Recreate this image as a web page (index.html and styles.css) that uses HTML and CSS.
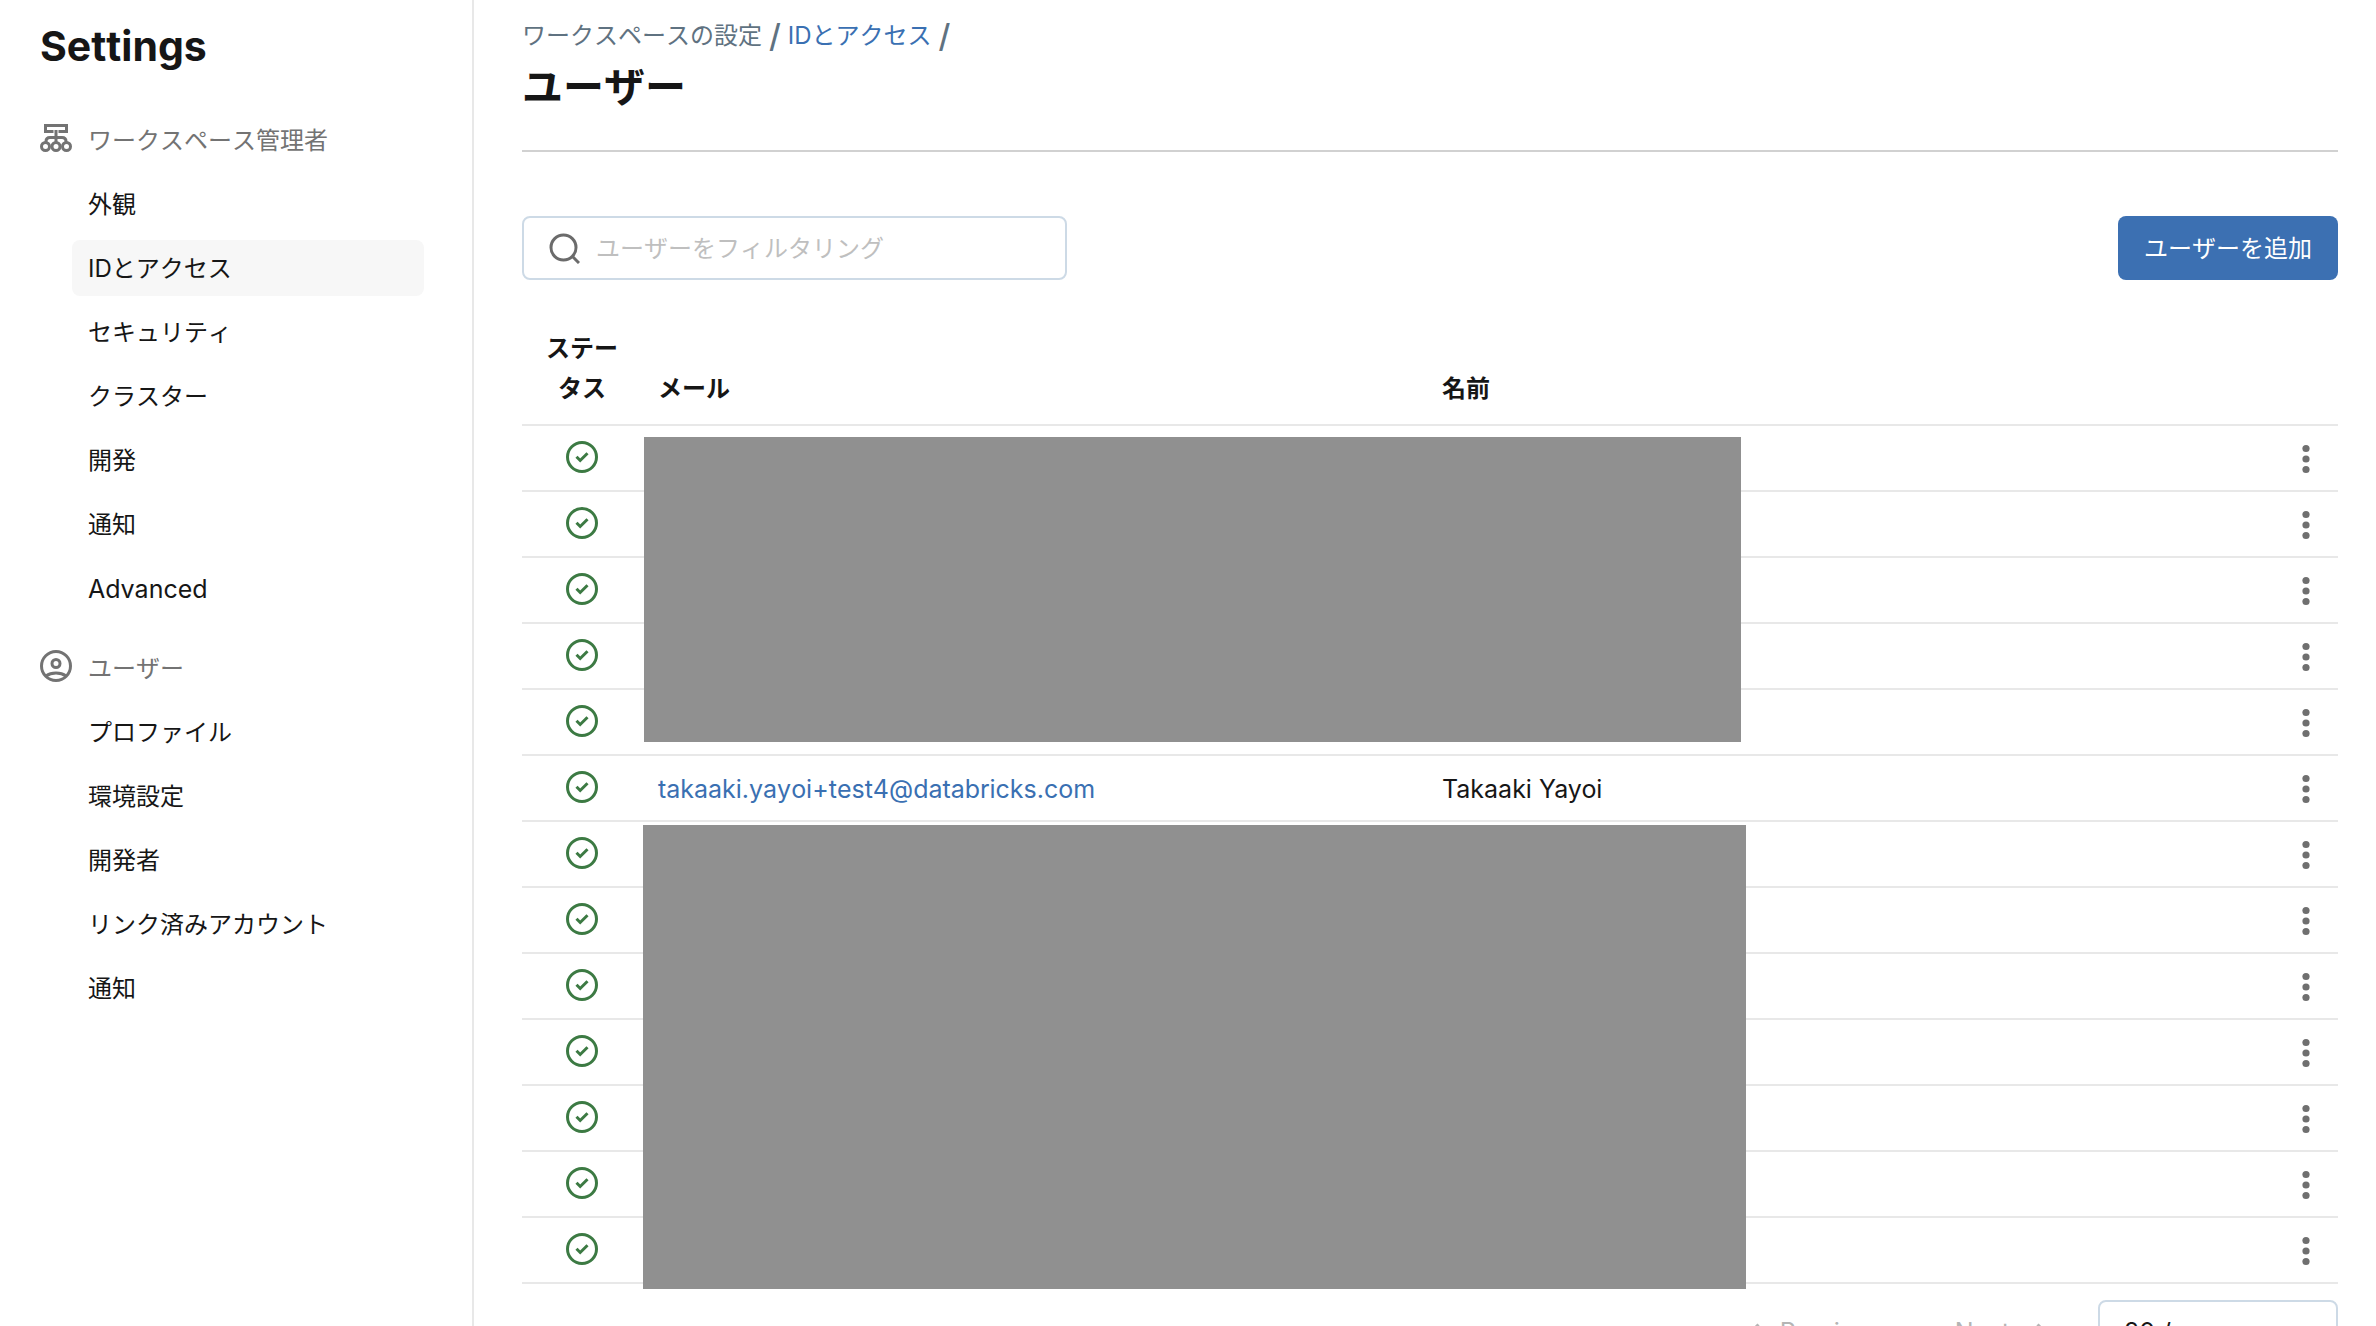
FILE: index.html
```html
<!DOCTYPE html>
<html lang="ja">
<head>
<meta charset="utf-8">
<title>ユーザー</title>
<link rel="stylesheet" href="styles.css">
</head>
<body>
<svg class="sprite" aria-hidden="true">
  <symbol id="check" viewBox="0 0 32 32"><circle cx="16" cy="16" r="14.5" fill="none" stroke="currentColor" stroke-width="3"/><path d="M10.5 15.8L14.2 19.5L21.5 12.2" fill="none" stroke="currentColor" stroke-width="3"/></symbol>
  <symbol id="dots" viewBox="0 0 32 32"><g fill="currentColor"><circle cx="16" cy="5.5" r="3.6"/><circle cx="16" cy="16" r="3.6"/><circle cx="16" cy="26.5" r="3.6"/></g></symbol>
</svg>
<div class="app">
  <nav class="sidebar">
    <h2 class="sidebar-title">Settings</h2>
    <section class="group">
      <h3 class="group-title">
        <svg class="icon" viewBox="0 0 32 32" fill="none" stroke="currentColor" stroke-width="3"><path d="M13.5 9.5H5.5V3.5H26.500V9.500H18.500M16 8V20M6 20V19.500Q6 15.500 10 15.500H22Q26 15.500 26 19.500V20"/><circle cx="5.500" cy="24.500" r="4"/><circle cx="16" cy="24.500" r="4"/><circle cx="26.500" cy="24.500" r="4"/></svg>
        ワークスペース管理者
      </h3>
      <ul class="menu">
        <li><a href="#">外観</a></li>
        <li><a href="#" class="active">IDとアクセス</a></li>
        <li><a href="#">セキュリティ</a></li>
        <li><a href="#">クラスター</a></li>
        <li><a href="#">開発</a></li>
        <li><a href="#">通知</a></li>
        <li><a href="#" class="latin">Advanced</a></li>
      </ul>
    </section>
    <section class="group">
      <h3 class="group-title">
        <svg class="icon" viewBox="0 0 32 32" fill="none" stroke="currentColor" stroke-width="3"><circle cx="16" cy="16" r="14.5"/><circle cx="16" cy="13.500" r="4"/><path d="M6 26Q10 23 16 23T26 26"/></svg>
        ユーザー
      </h3>
      <ul class="menu">
        <li><a href="#">プロファイル</a></li>
        <li><a href="#">環境設定</a></li>
        <li><a href="#">開発者</a></li>
        <li><a href="#">リンク済みアカウント</a></li>
        <li><a href="#">通知</a></li>
      </ul>
    </section>
  </nav>
  <main class="content">
    <header class="page-head">
      <div class="crumbs"><a href="#" class="crumb">ワークスペースの設定</a><span class="slash">/</span><a href="#" class="crumb link">IDとアクセス</a><span class="slash">/</span></div>
      <h1 class="page-title">ユーザー</h1>
    </header>
    <div class="toolbar">
      <label class="search">
        <svg class="icon" viewBox="0 0 32 32" fill="none" stroke="currentColor" stroke-width="3"><circle cx="15.500" cy="15.500" r="12.500"/><path d="M24.500 24.500L31 31"/></svg>
        <input type="search" placeholder="ユーザーをフィルタリング" aria-label="ユーザーをフィルタリング">
      </label>
      <button type="button" class="primary">ユーザーを追加</button>
    </div>
    <div class="table-wrap">
      <table class="users">
        <colgroup><col class="col-status"><col class="col-mail"><col><col class="col-menu"></colgroup>
        <thead><tr><th class="status">ステータス</th><th>メール</th><th>名前</th><th></th></tr></thead>
        <tbody>
          <tr><td class="status"><svg class="icon"><use href="#check"/></svg></td><td></td><td></td><td class="actions"><button type="button" aria-label="メニュー"><svg class="icon"><use href="#dots"/></svg></button></td></tr>
          <tr><td class="status"><svg class="icon"><use href="#check"/></svg></td><td></td><td></td><td class="actions"><button type="button" aria-label="メニュー"><svg class="icon"><use href="#dots"/></svg></button></td></tr>
          <tr><td class="status"><svg class="icon"><use href="#check"/></svg></td><td></td><td></td><td class="actions"><button type="button" aria-label="メニュー"><svg class="icon"><use href="#dots"/></svg></button></td></tr>
          <tr><td class="status"><svg class="icon"><use href="#check"/></svg></td><td></td><td></td><td class="actions"><button type="button" aria-label="メニュー"><svg class="icon"><use href="#dots"/></svg></button></td></tr>
          <tr><td class="status"><svg class="icon"><use href="#check"/></svg></td><td></td><td></td><td class="actions"><button type="button" aria-label="メニュー"><svg class="icon"><use href="#dots"/></svg></button></td></tr>
          <tr><td class="status"><svg class="icon"><use href="#check"/></svg></td><td><a href="#" class="link">takaaki.yayoi+test4@databricks.com</a></td><td class="name">Takaaki Yayoi</td><td class="actions"><button type="button" aria-label="メニュー"><svg class="icon"><use href="#dots"/></svg></button></td></tr>
          <tr><td class="status"><svg class="icon"><use href="#check"/></svg></td><td></td><td></td><td class="actions"><button type="button" aria-label="メニュー"><svg class="icon"><use href="#dots"/></svg></button></td></tr>
          <tr><td class="status"><svg class="icon"><use href="#check"/></svg></td><td></td><td></td><td class="actions"><button type="button" aria-label="メニュー"><svg class="icon"><use href="#dots"/></svg></button></td></tr>
          <tr><td class="status"><svg class="icon"><use href="#check"/></svg></td><td></td><td></td><td class="actions"><button type="button" aria-label="メニュー"><svg class="icon"><use href="#dots"/></svg></button></td></tr>
          <tr><td class="status"><svg class="icon"><use href="#check"/></svg></td><td></td><td></td><td class="actions"><button type="button" aria-label="メニュー"><svg class="icon"><use href="#dots"/></svg></button></td></tr>
          <tr><td class="status"><svg class="icon"><use href="#check"/></svg></td><td></td><td></td><td class="actions"><button type="button" aria-label="メニュー"><svg class="icon"><use href="#dots"/></svg></button></td></tr>
          <tr><td class="status"><svg class="icon"><use href="#check"/></svg></td><td></td><td></td><td class="actions"><button type="button" aria-label="メニュー"><svg class="icon"><use href="#dots"/></svg></button></td></tr>
          <tr><td class="status"><svg class="icon"><use href="#check"/></svg></td><td></td><td></td><td class="actions"><button type="button" aria-label="メニュー"><svg class="icon"><use href="#dots"/></svg></button></td></tr>
        </tbody>
      </table>
      <div class="mask mask-top"></div>
      <div class="mask mask-bottom"></div>
    </div>
    <footer class="pager">
      <button type="button" class="page-btn prev" disabled><svg class="icon" viewBox="0 0 32 32" fill="none" stroke="currentColor" stroke-width="3"><path d="M20.500 8.500L13 16L20.500 23.500"/></svg>Previous</button>
      <button type="button" class="page-btn" disabled>Next<svg class="icon" viewBox="0 0 32 32" fill="none" stroke="currentColor" stroke-width="3"><path d="M11.500 8.500L19 16L11.500 23.500"/></svg></button>
      <select class="page-size" aria-label="Page size"><option>20 / page</option></select>
    </footer>
  </main>
</div>
</body>
</html>
```
FILE: styles.css
```css
* { box-sizing: border-box; }

body {
  margin: 0;
  background: #fff;
  color: #161616;
  font-family: Inter, "Noto Sans CJK JP", sans-serif;
  font-size: 24px;
  font-kerning: none;
  line-height: 40px;
}

a { color: inherit; text-decoration: none; }
button, input, select { font: inherit; font-kerning: none; }
h1, h2, h3 { margin: 0; }

.sprite { display: none; }
.icon { display: block; width: 32px; height: 32px; flex: none; }
.link { color: #3a70b2; }

.app { display: flex; height: 100vh; overflow: hidden; }

.sidebar {
  flex: none;
  width: 474px;
  padding: 20px 48px 0 40px;
  border-right: 2px solid #e8e8e8;
}
.sidebar-title { margin-bottom: 44px; font-size: 41px; line-height: 52px; font-weight: 700; }
.group { margin-bottom: 28px; }
.group-title {
  display: flex;
  align-items: center;
  gap: 16px;
  height: 48px;
  margin-bottom: 12px;
  padding-top: 2px;
  color: #737373;
  font-size: 24px;
  font-weight: 400;
}
.group-title .icon { margin-bottom: 6px; }
.menu {
  display: flex;
  flex-direction: column;
  gap: 8px;
  margin: 0;
  padding: 0 0 0 32px;
  list-style: none;
}
.menu a { display: block; padding: 9px 16px 7px; border-radius: 8px; }
.menu .active { background: #f7f7f7; }
.menu .latin { font-size: 25px; }

.content { flex: 1; min-width: 0; padding: 14px 38px 0 48px; }
.page-head { padding-bottom: 34px; border-bottom: 2px solid #d1d1d1; }
.crumbs { display: flex; align-items: center; height: 44px; color: #5f7281; }
.slash { padding: 0 7px; font-size: 32px; font-weight: 500; }
.page-title { font-size: 41px; line-height: 58px; font-weight: 600; }

.toolbar { display: flex; justify-content: space-between; margin: 64px 0 48px; }
.search {
  display: flex;
  align-items: center;
  gap: 16px;
  width: 545px;
  height: 64px;
  padding: 0 24px;
  border: 2px solid #cddae6;
  border-radius: 8px;
  color: #6b6b6b;
}
.search input { flex: 1; min-width: 0; padding: 2px 0 0; border: 0; outline: 0; background: none; color: #161616; }
.search input::placeholder { color: #bfbfbf; opacity: 1; }
.primary { height: 64px; padding: 2px 26px 0; border: 0; border-radius: 8px; background: #3c70b2; color: #fff; }

.table-wrap { position: relative; }
.users { width: 100%; border-collapse: separate; border-spacing: 0; table-layout: fixed; }
.col-status { width: 120px; }
.col-mail { width: 784px; }
.col-menu { width: 64px; }
.users th { padding: 1px 16px 15px; border-bottom: 2px solid #e8e8e8; font-weight: 600; text-align: left; vertical-align: bottom; }
.users td { height: 66px; padding: 2px 16px 0; border-bottom: 2px solid #e8e8e8; font-size: 25px; }
.users .status { text-align: center; }
.users td.status { padding: 0 16px 2px; color: #3c7a43; }
.users td.name { font-kerning: normal; }
.users td .icon { margin: 0 auto; }
.actions button { display: block; padding: 0; border: 0; background: none; color: #6f6f6f; }

.mask { position: absolute; background: #909090; }
.mask-top { top: 109px; left: 122px; right: 597px; height: 305px; }
.mask-bottom { top: 497px; left: 121px; right: 592px; height: 464px; }

.pager { display: flex; justify-content: flex-end; align-items: center; gap: 16px; margin-top: 16px; font-size: 25px; }
.page-btn { display: flex; align-items: center; gap: 16px; height: 64px; padding: 0 24px; border: 0; background: none; color: #b5b5b5; }
.prev { gap: 10px; margin-right: 8px; }
.page-size {
  width: 240px;
  height: 64px;
  padding: 0 24px;
  border: 2px solid #cddae6;
  border-radius: 8px;
  background: #fff;
  color: #161616;
  appearance: none;
}
```
